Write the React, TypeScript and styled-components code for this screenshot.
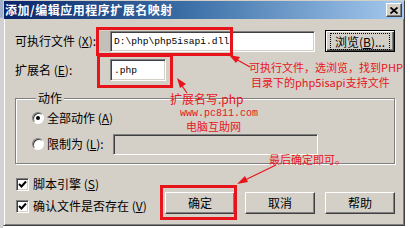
import React from 'react';
import styled, { createGlobalStyle } from 'styled-components';

const GlobalStyle = createGlobalStyle`
  html, body {
    margin: 0;
    padding: 0;
    background: #ffffff;
  }
  * {
    box-sizing: border-box;
  }
`;

const FACE = '#d4d0c8';
const RED = '#e8141c';
const CJK = '"Noto Sans CJK SC", "Noto Sans", sans-serif';

export default function App() {
  return (
    <>
      <GlobalStyle />
      <Page>
        <Backdrop />
        <Dialog>
          <TitleBar>
            <TitleText>添加/编辑应用程序扩展名映射</TitleText>
            <CloseButton>
              <svg width="8" height="7" viewBox="0 0 8 7">
                <path d="M0.5 0.5 L7.5 6.5 M7.5 0.5 L0.5 6.5" stroke="#000" strokeWidth="1.8" />
              </svg>
            </CloseButton>
          </TitleBar>

          <Body>
            <FieldRow>
              <FieldLabel $width={85}>
                可执行文件 (<u>X</u>):
              </FieldLabel>
              <Shade />
              <TextInput $width={205}>D:\php\php5isapi.dll</TextInput>
              <Button $width={70} $focused>
                <FocusRing>
                  浏览(<u>B</u>)...
                </FocusRing>
              </Button>
            </FieldRow>

            <FieldRow $top={7}>
              <FieldLabel $width={95}>
                扩展名 (<u>E</u>):
              </FieldLabel>
              <TextInput $width={56} $height={22}>.php</TextInput>
            </FieldRow>

            <GroupBox>
              <Legend>动作</Legend>
              <OptionRow>
                <Radio $checked />
                <OptionText>
                  全部动作 (<u>A</u>)
                </OptionText>
              </OptionRow>
              <OptionRow $top={5} $height={22}>
                <Radio />
                <OptionText $width={63}>
                  限制为 (<u>L</u>):
                </OptionText>
                <TextInput $width={205} $disabled />
              </OptionRow>
            </GroupBox>

            <Footer>
              <Checks>
                <CheckRow>
                  <CheckBox>
                    <svg width="9" height="9" viewBox="0 0 9 9">
                      <path d="M1 4 L3.5 6.5 L8 1.5" stroke="#000" strokeWidth="2" fill="none" />
                    </svg>
                  </CheckBox>
                  <OptionText>
                    脚本引擎 (<u>S</u>)
                  </OptionText>
                </CheckRow>
                <CheckRow>
                  <CheckBox>
                    <svg width="9" height="9" viewBox="0 0 9 9">
                      <path d="M1 4 L3.5 6.5 L8 1.5" stroke="#000" strokeWidth="2" fill="none" />
                    </svg>
                  </CheckBox>
                  <OptionText>
                    确认文件是否存在 (<u>V</u>)
                  </OptionText>
                </CheckRow>
              </Checks>
              <Buttons>
                <Button $width={70}>确定</Button>
                <Button $width={70}>取消</Button>
                <Button $width={70}>帮助</Button>
              </Buttons>
            </Footer>
          </Body>
        </Dialog>

        {/* red annotations drawn over the screenshot */}
        <Mark style={{ left: 96, top: 27, width: 137, height: 29 }} />
        <Mark style={{ left: 97, top: 54, width: 76, height: 34 }} />
        <Mark style={{ left: 160, top: 185, width: 77, height: 35 }} />

        <Note style={{ left: 249, top: 61 }} $size={11}>可执行文件，选浏览，找到PHP</Note>
        <Note style={{ left: 251, top: 76 }} $size={11}>目录下的php5isapi支持文件</Note>
        <Note style={{ left: 170, top: 92 }}>扩展名写.php</Note>
        <Site style={{ left: 180, top: 108 }}>www.pc811.com</Site>
        <Note style={{ left: 186, top: 120 }} $size={11}>电脑互助网</Note>
        <Note style={{ left: 269, top: 153 }} $size={11}>最后确定即可。</Note>

        <Arrows width="410" height="228" viewBox="0 0 410 228">
          <g stroke={RED} strokeWidth="1.2" fill={RED}>
            <line x1="250" y1="67" x2="234" y2="58" />
            <polygon points="229,55 240,57 236,63" stroke="none" />
            <line x1="187" y1="93" x2="180" y2="83" />
            <polygon points="177,78 186,84 180,88" stroke="none" />
            <line x1="276" y1="165" x2="243" y2="181" />
            <polygon points="237,184 245,176 248,182" stroke="none" />
          </g>
        </Arrows>
      </Page>
    </>
  );
}

const Page = styled.div`
  position: relative;
  width: 410px;
  height: 228px;
  display: flex;
  overflow: hidden;
  background: #ffffff;
  font-family: ${CJK};
  font-size: 12px;
  color: #000;
`;

const Backdrop = styled.div`
  width: 3px;
  height: 228px;
  background: linear-gradient(#9fb0c8 0 18px, #d2d2d2 18px);
`;

const Dialog = styled.div`
  width: 402px;
  height: 226px;
  display: flex;
  flex-direction: column;
  background: ${FACE};
  border: 1px solid;
  border-color: ${FACE} #404040 #404040 ${FACE};
  box-shadow: inset 1px 1px #ffffff, inset -1px -1px #808080;
`;

const TitleBar = styled.div`
  height: 18px;
  display: flex;
  align-items: center;
  justify-content: space-between;
  padding: 0 2px 0 1px;
  background: linear-gradient(90deg, #0a246a 0%, #3a6ea5 45%, #a6caf0 100%);
`;

const TitleText = styled.span`
  color: #ffffff;
  font-weight: bold;
  font-size: 12px;
  letter-spacing: 0.5px;
  line-height: 18px;
`;

const CloseButton = styled.div`
  width: 16px;
  height: 14px;
  display: flex;
  align-items: center;
  justify-content: center;
  background: ${FACE};
  border: 1px solid;
  border-color: #ffffff #404040 #404040 #ffffff;
  box-shadow: inset -1px -1px #808080;
`;

const Body = styled.div`
  display: flex;
  flex-direction: column;
  padding: 11px 9px 0 11px;
`;

const FieldRow = styled.div<{ $top?: number }>`
  display: flex;
  align-items: center;
  height: 22px;
  margin-top: ${(p) => p.$top ?? 0}px;
`;

const FieldLabel = styled.span<{ $width: number }>`
  width: ${(p) => p.$width}px;
  flex: none;
  white-space: nowrap;
  line-height: 14px;
`;

const Shade = styled.span`
  width: 10px;
  height: 20px;
  flex: none;
  background: #c4c0b8;
`;

const TextInput = styled.div<{ $width: number; $height?: number; $disabled?: boolean }>`
  width: ${(p) => p.$width}px;
  height: ${(p) => p.$height ?? 21}px;
  flex: none;
  display: flex;
  align-items: center;
  padding-left: 3px;
  background: ${(p) => (p.$disabled ? FACE : '#ffffff')};
  border: 1px solid;
  border-color: #808080 #ffffff #ffffff #808080;
  box-shadow: inset 1px 1px #404040, inset -1px -1px ${FACE};
  font-family: "Liberation Mono", "DejaVu Sans Mono", monospace;
  font-size: 9.6px;
  white-space: nowrap;
`;

const Button = styled.div<{ $width: number; $focused?: boolean }>`
  width: ${(p) => p.$width}px;
  height: 22px;
  flex: none;
  display: flex;
  align-items: center;
  justify-content: center;
  margin-left: ${(p) => (p.$focused ? 10 : 0)}px;
  background: ${FACE};
  border: 1px solid;
  border-color: ${(p) => (p.$focused ? '#000' : '#ffffff #404040 #404040 #ffffff')};
  box-shadow: ${(p) =>
    p.$focused
      ? 'inset 1px 1px #ffffff, inset -1px -1px #404040, inset -2px -2px #808080'
      : 'inset -1px -1px #808080'};
  white-space: nowrap;
  line-height: 14px;
`;

const FocusRing = styled.span`
  border: 1px dotted #000;
  padding: 1px 4px;
  line-height: 13px;
`;

const GroupBox = styled.fieldset`
  margin: 10px 0 0 0;
  padding: 3px 10px 8px 16px;
  min-width: 0;
  border: 1px solid #808080;
  box-shadow: inset 1px 1px #ffffff, 1px 1px #ffffff;
`;

const Legend = styled.legend`
  margin-left: 4px;
  padding: 0 2px;
  line-height: 14px;
  background: ${FACE};
`;

const OptionRow = styled.div<{ $top?: number; $height?: number }>`
  display: flex;
  align-items: center;
  gap: 3px;
  height: ${(p) => p.$height ?? 20}px;
  margin-top: ${(p) => p.$top ?? 0}px;
`;

const Radio = styled.span<{ $checked?: boolean }>`
  width: 12px;
  height: 12px;
  flex: none;
  display: flex;
  align-items: center;
  justify-content: center;
  border-radius: 50%;
  background: #ffffff;
  border: 1px solid;
  border-color: #808080 #ffffff #ffffff #808080;
  box-shadow: inset 1px 1px #404040;
  &::after {
    content: '';
    width: 4px;
    height: 4px;
    border-radius: 50%;
    background: ${(p) => (p.$checked ? '#000' : 'transparent')};
  }
`;

const OptionText = styled.span<{ $width?: number }>`
  width: ${(p) => (p.$width ? `${p.$width}px` : 'auto')};
  flex: none;
  white-space: nowrap;
  line-height: 14px;
`;

const Footer = styled.div`
  display: flex;
  justify-content: space-between;
  margin-top: 11px;
`;

const Checks = styled.div`
  display: flex;
  flex-direction: column;
  gap: 4px;
`;

const CheckRow = styled.div`
  display: flex;
  align-items: center;
  gap: 4px;
  height: 18px;
  padding-left: 1px;
`;

const CheckBox = styled.span`
  width: 13px;
  height: 13px;
  flex: none;
  display: flex;
  align-items: center;
  justify-content: center;
  background: #ffffff;
  border: 1px solid;
  border-color: #808080 #ffffff #ffffff #808080;
  box-shadow: inset 1px 1px #404040, inset -1px -1px ${FACE};
`;

const Buttons = styled.div`
  display: flex;
  gap: 10px;
  align-self: flex-end;
  margin-bottom: 1px;
`;

const Mark = styled.div`
  position: absolute;
  border: 3px solid ${RED};
  pointer-events: none;
`;

const Note = styled.span<{ $size?: number }>`
  position: absolute;
  color: ${RED};
  font-size: ${(p) => p.$size ?? 12}px;
  line-height: 13px;
  white-space: nowrap;
`;

const Site = styled.span`
  position: absolute;
  color: ${RED};
  font-family: "Liberation Mono", monospace;
  font-size: 10px;
  line-height: 11px;
  white-space: nowrap;
`;

const Arrows = styled.svg`
  position: absolute;
  left: 0;
  top: 0;
  pointer-events: none;
`;
